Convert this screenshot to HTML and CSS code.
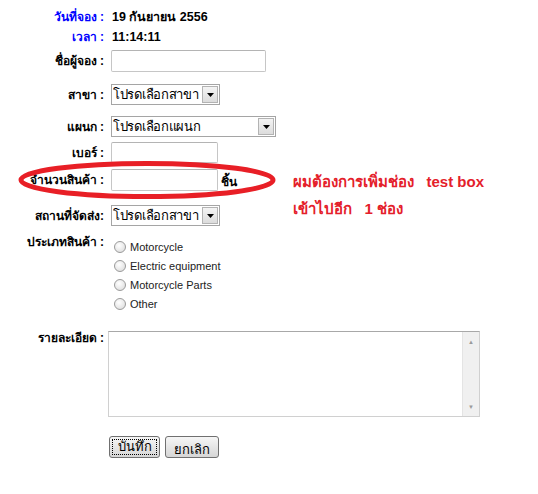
FILE: index.html
```html
<!DOCTYPE html>
<html lang="th">
<head>
  <meta charset="UTF-8" />
  <title>จองสินค้า</title>
  <link rel="stylesheet" href="styles.css">
</head>
<body>

<form class="booking">
  <div class="row r1"><span class="lbl blue">วันที่จอง :</span><b class="val">19 กันยายน 2556</b></div>
  <div class="row r2"><span class="lbl blue">เวลา :</span><b class="val">11:14:11</b></div>

  <div class="row r3"><label class="lbl">ชื่อผู้จอง :</label><input class="txt name" type="text"></div>

  <div class="row r4">
    <label class="lbl">สาขา :</label>
    <span class="dd short"><select><option>โปรดเลือกสาขา</option></select><span class="dd-btn"><svg width="7" height="4" viewBox="0 0 7 4"><path d="M0 0h7L3.5 4z"/></svg></span></span>
  </div>

  <div class="row r5">
    <label class="lbl">แผนก :</label>
    <span class="dd long"><select><option>โปรดเลือกแผนก</option></select><span class="dd-btn"><svg width="7" height="4" viewBox="0 0 7 4"><path d="M0 0h7L3.5 4z"/></svg></span></span>
  </div>

  <div class="row r6"><label class="lbl">เบอร์ :</label><input class="txt small" type="text"></div>

  <div class="row r7"><label class="lbl">จำนวนสินค้า :</label><input class="txt small qty" type="text"><span class="unit">ชิ้น</span></div>

  <div class="row r8">
    <label class="lbl">สถานที่จัดส่ง:</label>
    <span class="dd short"><select><option>โปรดเลือกสาขา</option></select><span class="dd-btn"><svg width="7" height="4" viewBox="0 0 7 4"><path d="M0 0h7L3.5 4z"/></svg></span></span>
  </div>

  <div class="row r9 top">
    <label class="lbl">ประเภทสินค้า :</label>
    <div class="radios">
      <label><input type="radio" name="type"> Motorcycle</label>
      <label><input type="radio" name="type"> Electric equipment</label>
      <label><input type="radio" name="type"> Motorcycle Parts</label>
      <label><input type="radio" name="type"> Other</label>
    </div>
  </div>

  <div class="row r10 top">
    <label class="lbl">รายละเอียด :</label>
    <div class="memo">
      <textarea></textarea>
      <div class="memo-bar"><span>&#9650;</span><span>&#9660;</span></div>
    </div>
  </div>

  <div class="row actions">
    <button type="submit" class="btn save"><span>บันทึก</span></button>
    <button type="reset" class="btn">ยกเลิก</button>
  </div>

  <!-- red note drawn over the screenshot -->
  <svg class="circle" width="262" height="46" viewBox="0 0 262 46"><ellipse cx="130" cy="22" rx="126" ry="16.5" fill="none" stroke="#e81f26" stroke-width="5"/></svg>
  <p class="note">ผมต้องการเพิ่มช่อง &nbsp; test box<br>เข้าไปอีก &nbsp; 1 ช่อง</p>
</form>

</body>
</html>
```

FILE: styles.css
```css
*{box-sizing:border-box}

body {
  margin:0;
  background:#fff;
  color:#000;
  font-family:"Liberation Sans","DejaVu Sans",sans-serif;
  font-size:12px;
  line-height:14px;
}

.booking {position:relative;padding-top:7px}

.row {display:flex;align-items:center;min-height:20px}
.row.top {align-items:flex-start}
.lbl {width:104px;flex:none;text-align:right;font-weight:700;line-height:14px}
.blue {color:#0000ff}
.val {margin-left:8px;font-size:12.5px}

.r3 {margin-top:3px}
.r4 {margin-top:12px}
.r5 {margin-top:11px}
.r6 {margin-top:5px}
.r7 {margin-top:6px}
.r8 {margin-top:14px}
.r9 {margin-top:9px}
.r10 {margin-top:18px}
.actions {margin-top:19px;padding-left:109px;gap:5px}

.txt {
  margin-left:7px;
  height:22px;
  border:1px solid #c6c6c6;
  border-top-color:#b4b4b4;
  border-radius:2px;
  background:#fff;
  font:12px "Liberation Sans",sans-serif;
}
.txt.name  {width:155px}
.txt.small {width:107px;height:21px}
.txt.qty   {height:22px}
.unit {font-weight:700;margin-left:3px;line-height:14px;align-self:flex-end;margin-bottom:2px}

.dd {
  margin-left:7px;
  display:inline-flex;
  align-items:center;
  height:21px;
  border:1px solid #a5a5a5;
  background:#fff;
}
.dd.short {width:109px}
.dd.long  {width:165px}
.dd select {
  appearance:none;
  -webkit-appearance:none;
  border:none;
  outline:none;
  background:transparent;
  flex:1;
  min-width:0;
  height:19px;
  padding:0 0 0 1px;
  font:13px "Liberation Sans",sans-serif;
  letter-spacing:-0.3px;
  color:#000;
}
.dd-btn {
  width:16px;
  height:17px;
  margin-right:1px;
  display:flex;
  align-items:center;
  justify-content:center;
  border:1px solid #b3b3b3;
  background:linear-gradient(#f4f4f4,#dcdcdc);
}

.radios {display:flex;flex-direction:column;margin:2px 0 0 10px}
.radios label {display:flex;align-items:center;height:19px;font-size:11px;color:#222}
.radios input {
  appearance:none;
  -webkit-appearance:none;
  width:12px;height:12px;
  margin:0 4px 0 0;
  border:1px solid #9a9a9a;
  border-radius:50%;
  background:radial-gradient(circle at 40% 35%,#fff,#d8d8d8);
}

.memo {
  margin-left:4px;
  display:flex;
  width:372px;
  height:86px;
  border:1px solid #d0d0d0;
  border-top-color:#a8a8a8;
  background:#fff;
}
.memo textarea {flex:1;border:none;outline:none;resize:none;font:12px "Liberation Sans",sans-serif}
.memo-bar {
  width:17px;
  background:#f0f0f0;
  border-left:1px solid #e4e4e4;
  display:flex;
  flex-direction:column;
  justify-content:space-between;
  align-items:center;
  padding:6px 0 5px;
  font-size:6px;
  line-height:8px;
  color:#9a9a9a;
}

.btn {
  height:22px;
  padding:2px;
  border:1px solid #707070;
  border-radius:3px;
  background:linear-gradient(#f6f6f6 0%,#e6e6e6 50%,#d6d6d6 100%);
  font:13px "Liberation Sans",sans-serif;
  color:#000;
}
.btn.save {width:51px}
.btn.save span {display:block;height:100%;border:1px dotted #000;line-height:14px}
.btn:not(.save) {width:54px}

.circle {position:absolute;left:17px;top:158px}
.note {
  position:absolute;
  left:293px;
  top:168px;
  margin:0;
  color:#e4202a;
  font-weight:700;
  font-size:15px;
  line-height:27px;
}
```
